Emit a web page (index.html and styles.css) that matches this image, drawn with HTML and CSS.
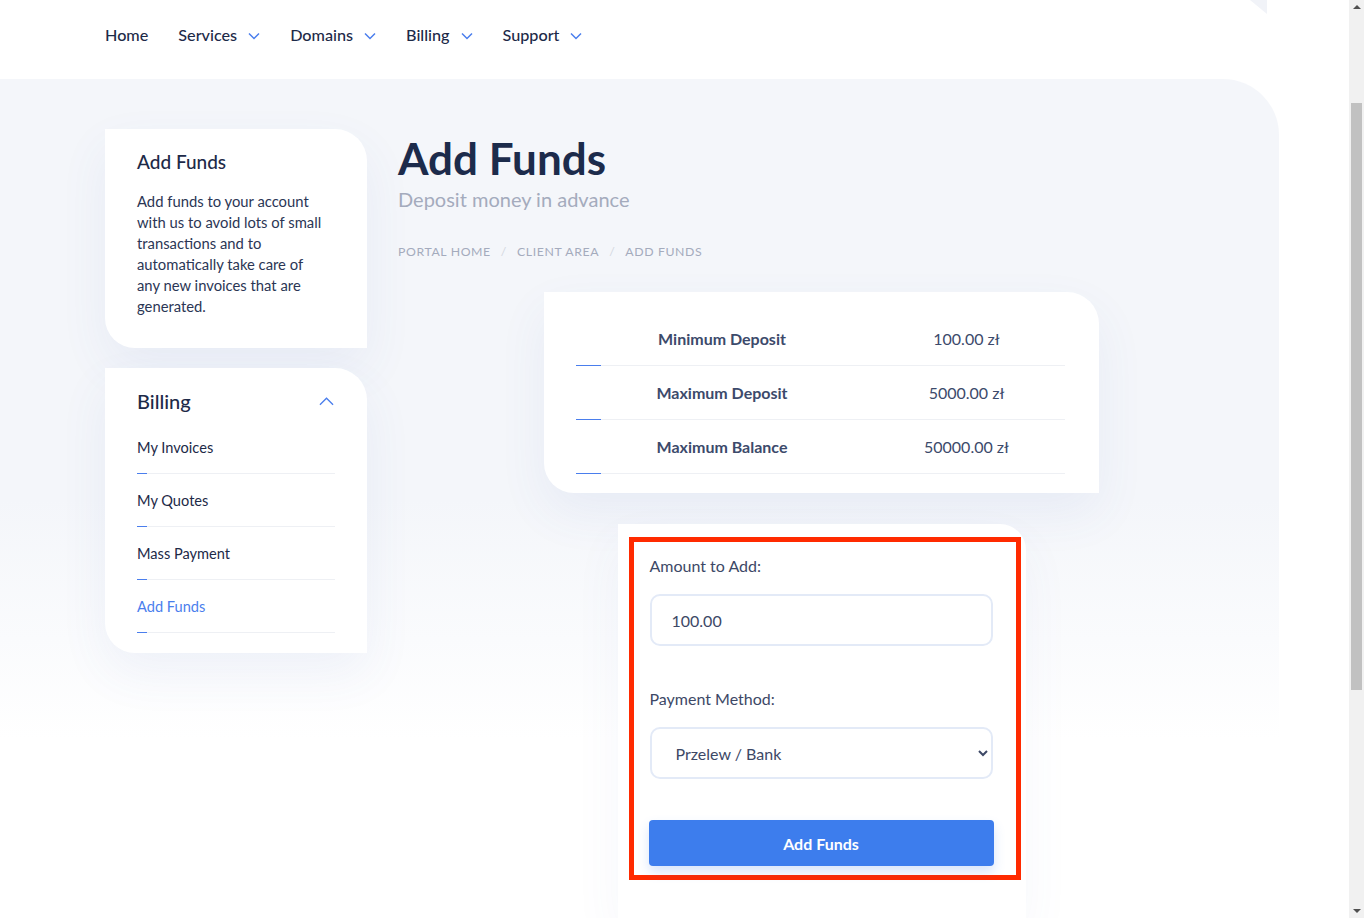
FILE: index.html
```html
<!DOCTYPE html>
<html lang="en">
<head>
  <meta charset="UTF-8">
  <meta name="viewport" content="width=device-width, initial-scale=1.0">
  <title>Add Funds</title>
  <link rel="stylesheet" href="styles.css">
</head>
<body>
  <!-- Top navigation -->
  <header class="topbar">
    <nav class="nav">
      <a class="nav-item" href="#">Home</a>
      <a class="nav-item" href="#">Services
        <svg class="caret" viewBox="0 0 12 8"><path d="M1 1.5l5 5 5-5"/></svg>
      </a>
      <a class="nav-item" href="#">Domains
        <svg class="caret" viewBox="0 0 12 8"><path d="M1 1.5l5 5 5-5"/></svg>
      </a>
      <a class="nav-item" href="#">Billing
        <svg class="caret" viewBox="0 0 12 8"><path d="M1 1.5l5 5 5-5"/></svg>
      </a>
      <a class="nav-item" href="#">Support
        <svg class="caret" viewBox="0 0 12 8"><path d="M1 1.5l5 5 5-5"/></svg>
      </a>
    </nav>
    <span class="corner-shape"></span>
  </header>

  <main class="page">
    <div class="container">
      <!-- Sidebar -->
      <aside class="sidebar">
        <div class="side-card">
          <h3 class="side-title">Add Funds</h3>
          <p class="side-text">Add funds to your account with us to avoid lots of small transactions and to automatically take care of any new invoices that are generated.</p>
        </div>

        <div class="side-card menu-card">
          <div class="menu-head">
            <h3 class="side-title">Billing</h3>
            <svg class="caret-up" viewBox="0 0 16 10"><path d="M1 9l7-7 7 7"/></svg>
          </div>
          <ul class="menu">
            <li><a href="#">My Invoices</a></li>
            <li><a href="#">My Quotes</a></li>
            <li><a href="#">Mass Payment</a></li>
            <li class="active"><a href="#">Add Funds</a></li>
          </ul>
        </div>
      </aside>

      <!-- Main content -->
      <section class="content">
        <h1 class="page-title">Add Funds</h1>
        <p class="page-sub">Deposit money in advance</p>
        <ol class="breadcrumb">
          <li>Portal Home</li>
          <li>Client Area</li>
          <li>Add Funds</li>
        </ol>

        <div class="limits-card">
          <div class="limit-row">
            <span class="limit-label">Minimum Deposit</span>
            <span class="limit-value">100.00 zł</span>
          </div>
          <div class="limit-row">
            <span class="limit-label">Maximum Deposit</span>
            <span class="limit-value">5000.00 zł</span>
          </div>
          <div class="limit-row">
            <span class="limit-label">Maximum Balance</span>
            <span class="limit-value">50000.00 zł</span>
          </div>
        </div>

        <div class="form-card">
          <form class="funds-form">
            <label for="amount">Amount to Add:</label>
            <input type="text" id="amount" value="100.00">

            <label for="method" class="second">Payment Method:</label>
            <select id="method">
              <option>Przelew / Bank</option>
            </select>

            <button type="button" class="btn-primary">Add Funds</button>
          </form>
        </div>
      </section>
    </div>
  </main>

  <!-- Window scrollbar as seen in the capture -->
  <div class="scrollbar">
    <span class="sb-up"></span>
    <span class="sb-thumb"></span>
    <span class="sb-down"></span>
  </div>
</body>
</html>
```

FILE: styles.css
```css
html, body {
  margin: 0;
  padding: 0;
}

body {
  font-family: Lato, "Noto Sans", Arial, sans-serif;
  color: #2b3655;
  background-color: #ffffff;
  overflow: hidden;
}

a {
  text-decoration: none;
  color: inherit;
}

/* Header */
.topbar {
  position: relative;
  height: 79px;
  background: #ffffff;
}

.nav {
  display: flex;
  align-items: center;
  gap: 30px;
  padding-left: 105px;
  height: 69px;
}

.nav-item {
  display: flex;
  align-items: center;
  font-size: 16.2px;
  color: #1d2a48;
  font-weight: 500;
}

.caret {
  width: 12px;
  height: 8px;
  margin-left: 11px;
  margin-top: 3px;
  fill: none;
  stroke: #4a7eed;
  stroke-width: 1.5;
}

.corner-shape {
  position: absolute;
  top: 0;
  left: 1250px;
  width: 17px;
  height: 14px;
  background: #f1f3f8;
  clip-path: polygon(0 0, 100% 0, 100% 100%);
}

/* Gray page area */
.page {
  width: 1279px;
  min-height: 1300px;
  border-top-right-radius: 56px;
  background: linear-gradient(180deg, #f4f6fa 0, #f4f6fa 420px, #fafbfd 560px, #ffffff 660px);
  padding-top: 50px;
  box-sizing: border-box;
}

.container {
  display: flex;
  gap: 31px;
  padding-left: 105px;
  width: 1140px;
}

/* Sidebar */
.sidebar {
  width: 262px;
  flex-shrink: 0;
  display: flex;
  flex-direction: column;
  gap: 20px;
}

.side-card {
  background: #ffffff;
  border-radius: 0 32px 0 30px;
  padding: 21px 32px 31px;
  box-shadow: 0 20px 50px rgba(70, 100, 180, 0.07);
}

.side-card:first-child {
  padding-right: 40px;
}

.side-title {
  margin: 0;
  font-size: 19px;
  line-height: 24px;
  font-weight: 500;
  color: #1d2a48;
}

.side-text {
  margin: 17px 0 0;
  font-size: 14.8px;
  line-height: 21px;
  color: #2b3655;
}

.menu-card {
  padding-bottom: 20px;
}

.menu-head {
  display: flex;
  justify-content: space-between;
  align-items: center;
}

.menu-head .side-title {
  font-size: 20px;
}

.caret-up {
  width: 15px;
  height: 10px;
  fill: none;
  stroke: #4a7eed;
  stroke-width: 1.4;
  margin-right: 1px;
}

.menu {
  list-style: none;
  margin: 8px 0 0;
  padding: 0;
}

.menu li {
  position: relative;
  padding: 17px 0 15px;
  border-bottom: 1px solid #eef0f4;
  font-size: 14.6px;
  line-height: 20px;
  color: #1d2a48;
}

.menu li::after {
  content: "";
  position: absolute;
  left: 0;
  bottom: -1px;
  width: 10px;
  height: 1px;
  background: #4a7eed;
}

.menu li.active a {
  color: #4a7eed;
}

/* Main content */
.content {
  flex: 1;
  display: flex;
  flex-direction: column;
}

.page-title {
  margin: 3px 0 0;
  font-size: 44px;
  line-height: 52px;
  font-weight: 700;
  color: #1c2b4b;
}

.page-sub {
  margin: 2px 0 0;
  font-size: 20px;
  line-height: 26px;
  color: #a4abbd;
}

.breadcrumb {
  display: flex;
  list-style: none;
  margin: 32px 0 0;
  padding: 0;
  font-size: 12.3px;
  letter-spacing: 0.6px;
  text-transform: uppercase;
  color: #a4abbd;
}

.breadcrumb li + li::before {
  content: "/";
  color: #d3d7e0;
  padding: 0 10px;
}

.limits-card {
  align-self: center;
  width: 555px;
  box-sizing: border-box;
  margin-top: 33px;
  padding: 20px 34px 19px 32px;
  background: #ffffff;
  border-radius: 0 32px 0 30px;
  box-shadow: 0 20px 50px rgba(70, 100, 180, 0.07);
}

.limit-row {
  position: relative;
  display: grid;
  grid-template-columns: 292px 1fr;
  align-items: center;
  height: 53px;
  border-bottom: 1px solid #eef0f4;
  font-size: 16px;
  color: #3c4a6b;
}

.limit-row::after {
  content: "";
  position: absolute;
  left: 0;
  bottom: -1px;
  width: 25px;
  height: 1px;
  background: #4a7eed;
}

.limit-label {
  text-align: center;
  font-weight: 700;
}

.limit-value {
  text-align: center;
}

/* Form */
.form-card {
  align-self: center;
  width: 408px;
  box-sizing: border-box;
  margin-top: 31px;
  padding: 13px 5px 40px 11px;
  background: #ffffff;
  border-radius: 0 26px 0 0;
  box-shadow: 0 20px 50px rgba(70, 100, 180, 0.05);
}

.funds-form {
  display: flex;
  flex-direction: column;
  border: 5px solid #ff2a00;
  padding: 12px 22px 9px 15px;
}

.funds-form label {
  font-size: 16px;
  line-height: 24px;
  color: #3d4866;
  margin: 0 1px 16px;
}

.funds-form label.second {
  margin-top: 41px;
}

.funds-form input,
.funds-form select {
  height: 52px;
  margin: 0 1px;
  box-sizing: border-box;
  border: 2px solid #e3eaf7;
  border-radius: 10px;
  padding: 0 20px;
  font-family: inherit;
  font-size: 16px;
  color: #3d4866;
  background: #ffffff;
  outline: none;
}

.btn-primary {
  margin-top: 41px;
  height: 46px;
  border: none;
  border-radius: 4px;
  background: #3d7ded;
  color: #ffffff;
  font-family: inherit;
  font-size: 16px;
  font-weight: 700;
  box-shadow: 0 6px 12px rgba(61, 125, 237, 0.2);
  cursor: pointer;
}

/* Scrollbar */
.scrollbar {
  position: fixed;
  top: 0;
  right: 0;
  width: 15px;
  height: 100%;
  background: #f1f1f1;
}

.sb-up,
.sb-down {
  position: absolute;
  left: 4px;
  width: 0;
  height: 0;
  border-left: 4px solid transparent;
  border-right: 4px solid transparent;
}

.sb-up {
  top: 5px;
  border-bottom: 4px solid #505050;
}

.sb-down {
  bottom: 5px;
  border-top: 4px solid #505050;
}

.sb-thumb {
  position: absolute;
  top: 103px;
  left: 2px;
  width: 11px;
  height: 587px;
  background: #c1c1c1;
}
```
